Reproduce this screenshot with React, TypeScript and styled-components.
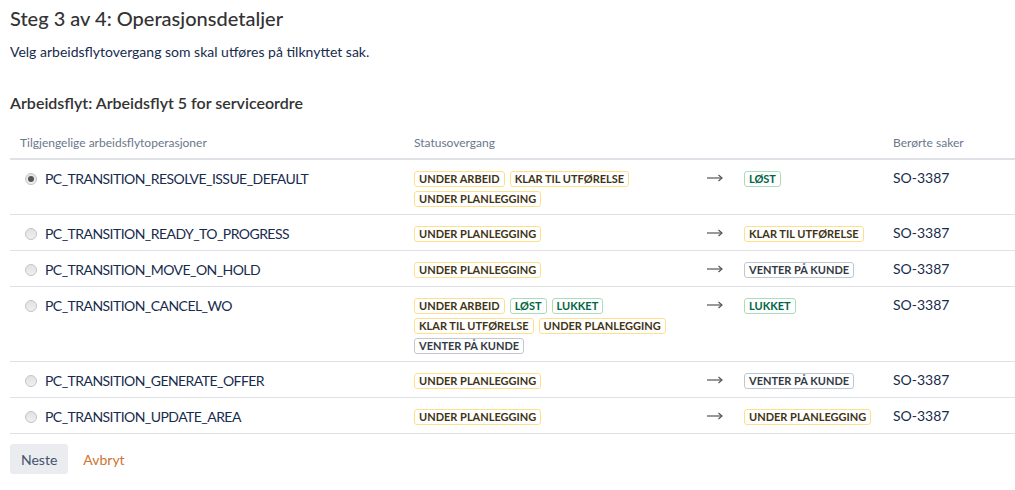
import React, { useState } from 'react';
import styled, { createGlobalStyle } from 'styled-components';

const FONT = `"Segoe UI", Lato, "Liberation Sans", sans-serif`;

const GlobalStyle = createGlobalStyle`
  body {
    margin: 0;
    background: #ffffff;
    font-family: ${FONT};
    color: #172b4d;
  }
`;

const Page = styled.div`
  padding: 6px 0 0 10px;
`;

const Title = styled.h2`
  margin: 0;
  font-size: 20px;
  line-height: 24px;
  font-weight: 500;
  color: #333333;
`;

const Description = styled.p`
  margin: 12px 0 0;
  font-size: 14px;
  line-height: 20px;
  color: #172b4d;
`;

const WorkflowTitle = styled.h3`
  margin: 31px 0 0;
  font-size: 16px;
  line-height: 20px;
  font-weight: 600;
  color: #333333;
`;

const Table = styled.table`
  margin-top: 15px;
  width: 100%;
  border-collapse: collapse;
  table-layout: fixed;
`;

const HeaderCell = styled.th<{ $width?: number }>`
  width: ${(p) => (p.$width ? `${p.$width}px` : 'auto')};
  text-align: left;
  font-size: 12px;
  font-weight: 400;
  line-height: 20px;
  color: #6b778c;
  padding: 5px 10px 5px;
  border-bottom: 2px solid #dfe1e6;
`;

const Row = styled.tr`
  border-bottom: 1px solid #dfe1e6;
`;

const Cell = styled.td`
  vertical-align: top;
  padding: 8px 10px 6px;
  font-size: 14px;
  line-height: 20px;
  color: #172b4d;
`;

const OperationLabel = styled.label`
  display: flex;
  align-items: center;
  height: 21px;
  gap: 8px;
  letter-spacing: -0.55px;
  cursor: pointer;
`;

const Radio = styled.input`
  appearance: none;
  margin: 0 0 0 5px;
  width: 12px;
  height: 12px;
  border-radius: 50%;
  border: 1px solid #c5c5c5;
  background: linear-gradient(#e2e2e2, #efefef);
  position: relative;
  flex-shrink: 0;

  &:checked::after {
    content: '';
    position: absolute;
    left: 2px;
    top: 2px;
    width: 6px;
    height: 6px;
    border-radius: 50%;
    background: #555555;
  }
`;

const Transition = styled.div`
  display: flex;
  align-items: flex-start;
`;

const FromStatuses = styled.div`
  width: 283px;
  flex-shrink: 0;
`;

const ArrowBox = styled.span`
  width: 37px;
  flex-shrink: 0;
  padding-left: 10px;
  height: 20px;
  display: flex;
  align-items: center;
  color: #555555;
`;

const ToStatus = styled.div`
  flex-shrink: 0;
  white-space: nowrap;
`;

type Tone = 'yellow' | 'green' | 'grey';

const toneColors: Record<Tone, { border: string; text: string }> = {
  yellow: { border: '#ffe08a', text: '#3f3414' },
  green: { border: '#abdcb9', text: '#006644' },
  grey: { border: '#c1c7d0', text: '#333a44' },
};

const Lozenge = styled.span<{ $tone: Tone }>`
  display: inline-block;
  box-sizing: border-box;
  height: 16px;
  padding: 0 4px;
  margin-right: 5px;
  border: 1px solid ${(p) => toneColors[p.$tone].border};
  border-radius: 3px;
  font-size: 11px;
  font-weight: 700;
  line-height: 14px;
  white-space: nowrap;
  text-transform: uppercase;
  color: ${(p) => toneColors[p.$tone].text};
  vertical-align: middle;
`;

const Actions = styled.div`
  display: flex;
  align-items: center;
  gap: 5px;
  margin-top: 10px;
`;

const NextButton = styled.button`
  height: 30px;
  padding: 0 11px;
  border: none;
  border-radius: 3px;
  background: #ebecf0;
  color: #42526e;
  font-family: ${FONT};
  font-size: 14px;
  cursor: pointer;
`;

const CancelLink = styled.a`
  padding: 0 10px;
  font-size: 14px;
  color: #cf7430;
  text-decoration: none;
  cursor: pointer;
`;

type Status = { name: string; tone: Tone };

const UA: Status = { name: 'Under arbeid', tone: 'yellow' };
const KTU: Status = { name: 'Klar til utførelse', tone: 'yellow' };
const UP: Status = { name: 'Under planlegging', tone: 'yellow' };
const LOST: Status = { name: 'Løst', tone: 'green' };
const LUKKET: Status = { name: 'Lukket', tone: 'green' };
const VPK: Status = { name: 'Venter på kunde', tone: 'grey' };

type Operation = { id: string; from: Status[]; to: Status; issue: string };

const operations: Operation[] = [
  { id: 'PC_TRANSITION_RESOLVE_ISSUE_DEFAULT', from: [UA, KTU, UP], to: LOST, issue: 'SO-3387' },
  { id: 'PC_TRANSITION_READY_TO_PROGRESS', from: [UP], to: KTU, issue: 'SO-3387' },
  { id: 'PC_TRANSITION_MOVE_ON_HOLD', from: [UP], to: VPK, issue: 'SO-3387' },
  { id: 'PC_TRANSITION_CANCEL_WO', from: [UA, LOST, LUKKET, KTU, UP, VPK], to: LUKKET, issue: 'SO-3387' },
  { id: 'PC_TRANSITION_GENERATE_OFFER', from: [UP], to: VPK, issue: 'SO-3387' },
  { id: 'PC_TRANSITION_UPDATE_AREA', from: [UP], to: UP, issue: 'SO-3387' },
];

const ArrowIcon = () => (
  <svg width="16" height="8" viewBox="0 0 16 8" fill="none" stroke="currentColor" strokeWidth="1.2">
    <path d="M0 4h15" />
    <path d="M11.5 1l3.5 3-3.5 3" />
  </svg>
);

const App = () => {
  const [selected, setSelected] = useState(operations[0].id);

  return (
    <Page>
      <GlobalStyle />
      <Title>Steg 3 av 4: Operasjonsdetaljer</Title>
      <Description>Velg arbeidsflytovergang som skal utføres på tilknyttet sak.</Description>
      <WorkflowTitle>Arbeidsflyt: Arbeidsflyt 5 for serviceordre</WorkflowTitle>
      <Table>
        <thead>
          <tr>
            <HeaderCell $width={374}>Tilgjengelige arbeidsflytoperasjoner</HeaderCell>
            <HeaderCell $width={459}>Statusovergang</HeaderCell>
            <HeaderCell>Berørte saker</HeaderCell>
          </tr>
        </thead>
        <tbody>
          {operations.map((op) => (
            <Row key={op.id}>
              <Cell>
                <OperationLabel>
                  <Radio
                    type="radio"
                    name="operation"
                    checked={selected === op.id}
                    onChange={() => setSelected(op.id)}
                  />
                  {op.id}
                </OperationLabel>
              </Cell>
              <Cell>
                <Transition>
                  <FromStatuses>
                    {op.from.map((s, i) => (
                      <Lozenge key={i} $tone={s.tone}>{s.name}</Lozenge>
                    ))}
                  </FromStatuses>
                  <ArrowBox>
                    <ArrowIcon />
                  </ArrowBox>
                  <ToStatus>
                    <Lozenge $tone={op.to.tone}>{op.to.name}</Lozenge>
                  </ToStatus>
                </Transition>
              </Cell>
              <Cell>{op.issue}</Cell>
            </Row>
          ))}
        </tbody>
      </Table>
      <Actions>
        <NextButton>Neste</NextButton>
        <CancelLink>Avbryt</CancelLink>
      </Actions>
    </Page>
  );
};

export default App;
